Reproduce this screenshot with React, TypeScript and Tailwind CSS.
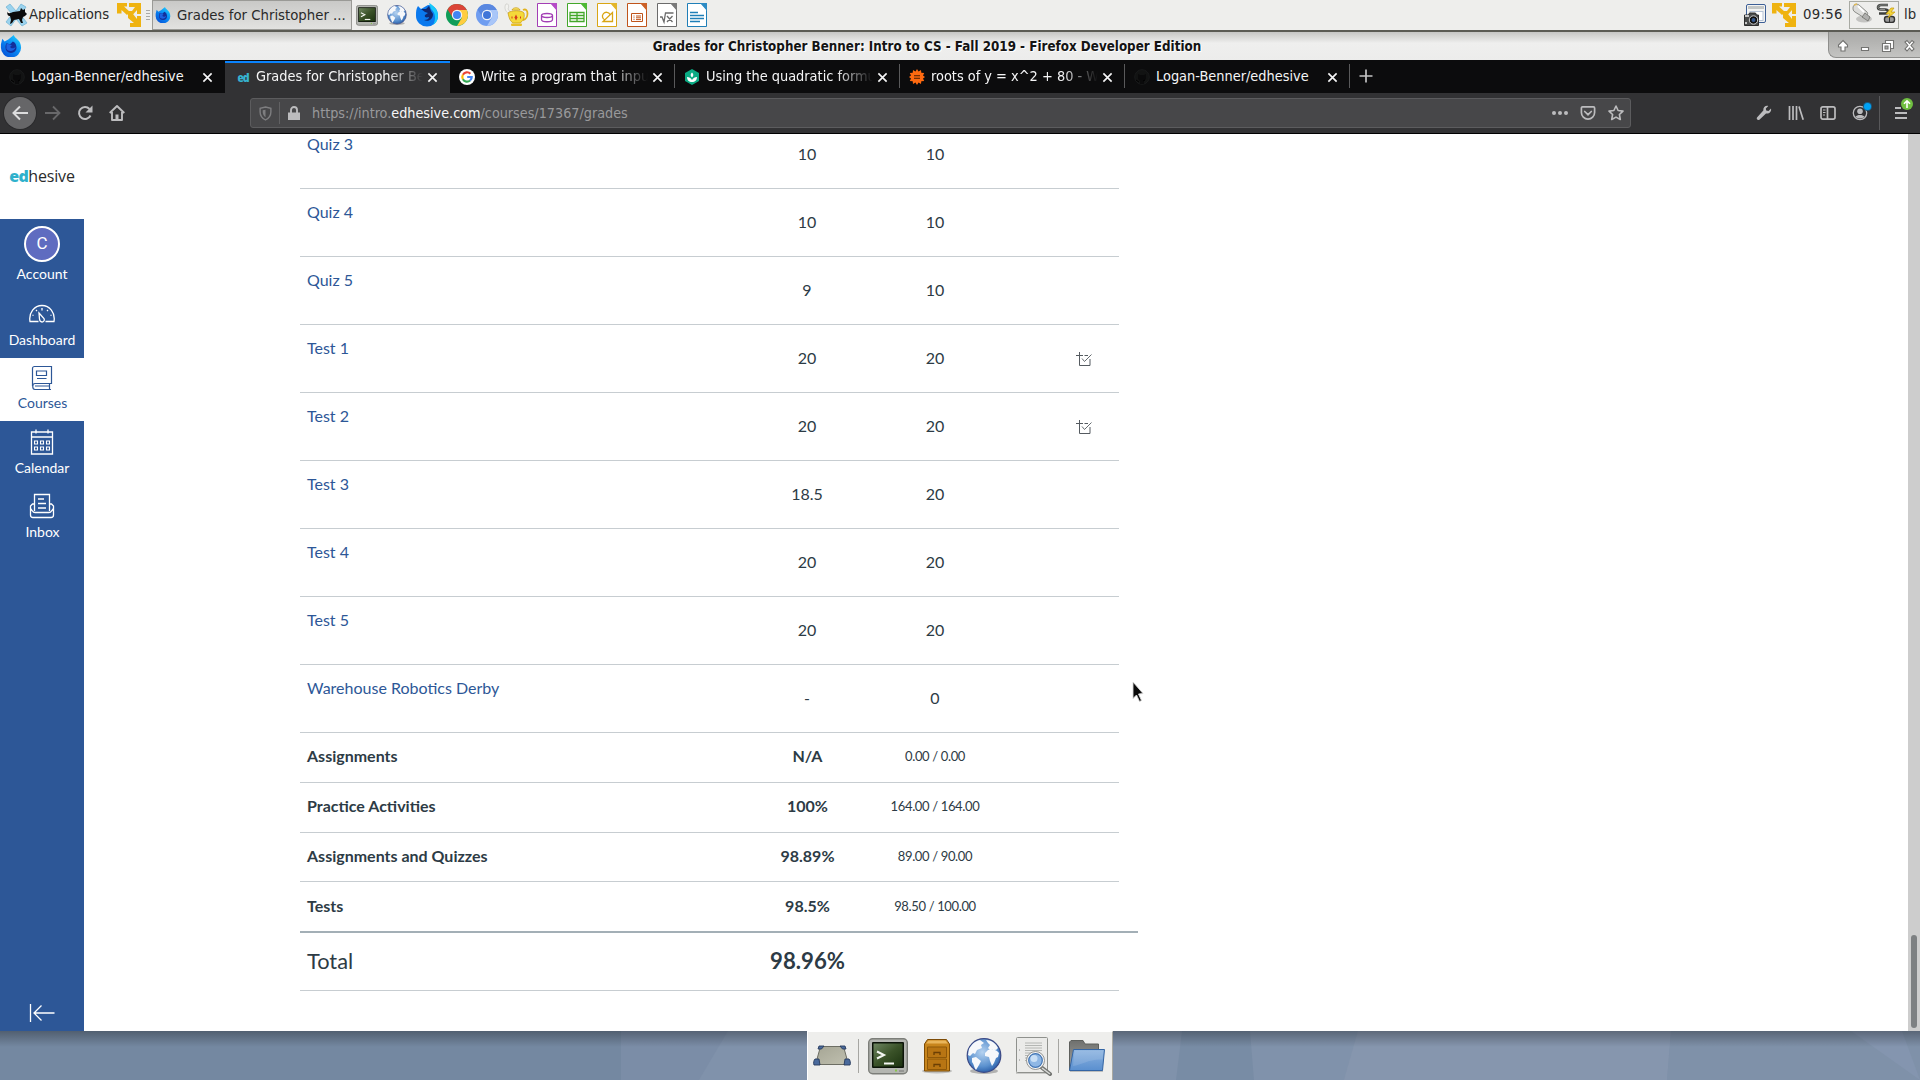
import React from "react";

type P = { className?: string };

const XfceMenuIcon = () => (
  <svg viewBox="0 0 24 24" className="h-6 w-6 shrink-0">
    <path d="M2 4l4-3 6 7 5-7 5 3-5 8 6 8-5 3-6-7-5 7-5-4 6-8z" fill="#9bd3ee" stroke="#5fa9cf" strokeWidth="0.6" />
    <path d="M3 9c2 2 4 1 6 0l7-1 1-3 2 2 2-1v3l2 2-2 2-2 1-1 3 1 3h-2l-2-4-5 1-2 3-2 1 1-4-1-4c-2 0-3-1-3-6z" fill="#0b0b0b" />
  </svg>
);

const YellowArrows = () => (
  <svg viewBox="0 0 24 24" className="h-6 w-6 shrink-0" fill="#efb310">
    <path d="M0 0h10v3.500H7l6 5.500-3 3-5.500-5v3.500H0z" />
    <path d="M12 0h12v11h-4V7l-4 4.500h-5V8h4l3-4h-6z" />
    <path d="M11 11h5l4 5v-3h4v11H13v-4h4l-6-5z" />
  </svg>
);

const FirefoxIcon = ({ className }: P) => (
  <svg viewBox="0 0 24 24" className={className}>
    <defs>
      <linearGradient id="ff" x1="1" y1="0" x2="0.200" y2="1">
        <stop offset="0" stopColor="#21dcff" />
        <stop offset="0.500" stopColor="#0a8cf5" />
        <stop offset="1" stopColor="#0653d8" />
      </linearGradient>
    </defs>
    <path d="M1 10l1.500-6L5 7l4-2 6-5c1 4 8 5 8 14a11 10.500 0 0 1-22 0z" fill="url(#ff)" />
    <path d="M7 9l4 1 3-3c3 1 4 4 4 7a6 5.500 0 0 1-12 0c0-2 0-3 1-5z" fill="#13309b" />
    <path d="M7 10c3-1 4 1 6 1l-2 2c1 2 4 2 6 0-1 5-8 6-10 2z" fill="#1c62e0" />
  </svg>
);

const FirefoxClassic = () => (
  <svg viewBox="0 0 24 24" className="h-6 w-6 shrink-0">
    <path d="M1 12c0-3 0-6 2-9l3 3 7-4c6 0 10 4 10 11a11 10.500 0 0 1-22 0z" fill="#0a79ee" />
    <path d="M14 0c4 2 9 6 9 13a11 11 0 0 1-5 9c3-5 3-12-2-16z" fill="#19c8fb" />
    <path d="M6 6l5 0 3-3 2 5 2 3c0 6-5 8-9 6 3 0 5-1 5-3-3 1-5 0-4-2l3-2-3-1z" fill="#10286f" />
  </svg>
);

const ChromeIcon = ({ a, b, c, d }: { a: string; b: string; c: string; d: string }) => (
  <svg viewBox="0 0 24 24" className="h-6 w-6 shrink-0">
    <circle cx="12" cy="12" r="11" fill={b} />
    <path d="M12 12V7h9.800a11 11 0 0 1-9.800 16l5-8.500z" fill={c} />
    <path d="M2.500 6.500A11 11 0 0 1 21.800 7H12l-4 8z" fill={a} />
    <circle cx="12" cy="12" r="5.200" fill="#f3f5f8" />
    <circle cx="12" cy="12" r="4" fill={d} />
  </svg>
);

const TerminalIcon = ({ className }: P) => (
  <svg viewBox="0 0 40 37" className={className} preserveAspectRatio="none">
    <defs>
      <linearGradient id="tm" x1="0" y1="0" x2="1" y2="1">
        <stop offset="0" stopColor="#6d8560" />
        <stop offset="0.500" stopColor="#3a5228" />
        <stop offset="1" stopColor="#1c3310" />
      </linearGradient>
    </defs>
    <rect x="0.700" y="0.700" width="38.600" height="35" rx="4" fill="#b4b6b1" stroke="#7c7e79" strokeWidth="1.400" />
    <rect x="4" y="4" width="32" height="26" rx="1" fill="#0c1409" />
    <rect x="5.500" y="5.500" width="29" height="23" fill="url(#tm)" />
    <path d="M9 13.500l7 3.500-7 3.500" fill="none" stroke="#f4f6f2" strokeWidth="2" />
    <path d="M16 25.500h10" stroke="#f4f6f2" strokeWidth="2" />
    <rect x="27" y="31.500" width="2" height="2" fill="#87c44a" />
    <path d="M31 33h5" stroke="#777" />
  </svg>
);

const GlobeIcon = ({ className }: P) => (
  <svg viewBox="0 0 36 36" className={className}>
    <defs>
      <radialGradient id="gl" cx="0.450" cy="0.400" r="0.600">
        <stop offset="0" stopColor="#b5d2f0" />
        <stop offset="0.700" stopColor="#5c92cf" />
        <stop offset="1" stopColor="#2f64ad" />
      </radialGradient>
    </defs>
    <ellipse cx="18" cy="33" rx="14" ry="3" fill="#000" opacity="0.250" />
    <circle cx="18" cy="17.500" r="16.800" fill="url(#gl)" stroke="#3c4a86" strokeWidth="1.200" />
    <path d="M3 11c3-5 6-8 11-9l4 3-3 2 1 3-5 2-2 4-2-1-3 3-2-1zM20 2c6 0 10 4 12 8l-2 2-4-1-2 1-2-2 2-3-2-2zM19 15l3-3 5-1 4 2 2 2-1 4-2 1-2 5-2 3-2-5-1-4-4-1zM6 20l4-1 5 4-2 4-3 5c-2-2-2-6-4-8z" fill="#f6f8fb" />
  </svg>
);

const CameraIcon = () => (
  <svg viewBox="0 0 24 24" className="h-6 w-6 shrink-0">
    <rect x="3.500" y="1.500" width="19" height="18" rx="1.500" fill="#f4f4f2" stroke="#3d5f96" />
    <rect x="5" y="3" width="16" height="3" fill="#c4c7c6" />
    <rect x="7" y="8.500" width="13" height="9" fill="#fff" stroke="#b7c4d6" />
    <path d="M1.500 12h4l1-2h6l1 2h2v10.500h-14z" fill="#4a4c4b" stroke="#2c2c2c" />
    <path d="M2 13h4M2 20h2" stroke="#c7c7c7" strokeWidth="2" />
    <circle cx="10.500" cy="17" r="4.200" fill="#111" stroke="#cfcfcf" strokeWidth="1" />
    <circle cx="10.500" cy="17" r="2" fill="#35588d" />
  </svg>
);

const MouseIcon = () => (
  <svg viewBox="0 0 20 20" className="h-5 w-5">
    <ellipse cx="12" cy="16" rx="8" ry="3.500" fill="#000" opacity="0.180" />
    <path d="M1 5c0-3 3-5 6-3l8 7c2 2-1 6-4 5L3 9C1 8 1 6 1 5z" fill="#dcdcda" stroke="#8d8f8a" />
    <path d="M6 3l6 6" stroke="#fff" strokeWidth="2" />
    <path d="M13 10l5 4-2 4-6-4z" fill="#b0b0ae" stroke="#6d6f6a" strokeWidth="0.800" />
    <path d="M2 2l3-1" stroke="#e2bb5a" strokeWidth="1.500" />
  </svg>
);

const PlugIcon = () => (
  <svg viewBox="0 0 20 20" className="h-5 w-5">
    <path d="M12 2H5C1 2 1 6.500 5 6.500h4c4 0 4 4 0 4H3" fill="none" stroke="#3c3e3b" strokeWidth="2.600" />
    <path d="M12 2H5C1 2 1 6.500 5 6.500h4" fill="none" stroke="#a0a29e" strokeWidth="0.800" />
    <rect x="8.500" y="13.500" width="10" height="6" rx="2.500" fill="#999" stroke="#333" strokeWidth="1.400" />
    <path d="M13.500 14v5" stroke="#333" />
    <path d="M15 5l-5 6h4l-2 4 7-6h-4l3-4z" fill="#f5d63c" stroke="#c49b0d" strokeWidth="0.700" />
  </svg>
);

const TeapotIcon = () => (
  <svg viewBox="0 0 26 24" className="h-6 w-[26px] shrink-0">
    <path d="M2 1c3-1 3 3 2 5l3 4-3 0C1 8 0 4 2 1z" fill="#f2f2ef" stroke="#c8c8c4" strokeWidth="0.700" />
    <path d="M19 7c6-3 6 9 0 10" fill="none" stroke="#e2b31f" strokeWidth="1.800" />
    <path d="M4 10c3-3 14-3 16 0 1 5-1 8-4 10H9c-3-2-4-5-5-10z" fill="#f5d93a" stroke="#c99a12" strokeWidth="0.700" />
    <path d="M8 7c1-3 7-3 8 0z" fill="#f7e365" stroke="#c99a12" strokeWidth="0.700" />
    <rect x="7" y="20.500" width="11" height="2.500" rx="1" fill="#e8bf27" />
    <path d="M12 11.500l1.500 3-1.500 3-1.500-3z" fill="#d63a1c" />
    <path d="M8 13.500v2M16.500 13.500v2" stroke="#d63a1c" />
  </svg>
);

const DocIcon = ({ color, fold, children }: { color: string; fold: string; children: React.ReactNode }) => (
  <svg viewBox="0 0 20 24" className="h-6 w-5 shrink-0">
    <path d="M0.500 0.500h19v23h-19z" fill="#fff" stroke={color} />
    <path d="M13 0h7v8z" fill={fold} />
    <path d="M13 1l6 7" stroke="#fff" strokeWidth="0.800" />
    <g fill="none" stroke={color} strokeWidth="1.300">{children}</g>
  </svg>
);

const Close = ({ className }: P) => (
  <svg viewBox="0 0 12 12" className={className}>
    <path d="M1.500 1.500l9 9M10.500 1.500l-9 9" stroke="currentColor" strokeWidth="1.800" />
  </svg>
);

const Octocat = () => (
  <svg viewBox="0 0 16 16" className="h-4 w-4">
    <circle cx="8" cy="8" r="7.300" fill="#121313" stroke="#191a1b" strokeWidth="1" />
    <path d="M4 5l2 1h4l2-1v5l-2 2v3H6v-3l-2-2z" fill="#0a0a0b" />
    <path d="M2 11l3 2M9 12l2-1" stroke="#000" />
  </svg>
);

const GoogleIcon = () => (
  <svg viewBox="0 0 16 16" className="h-4 w-4">
    <circle cx="8" cy="8" r="8" fill="#fff" />
    <g fill="none" strokeWidth="2.200">
      <path d="M11.400 4.700A4.700 4.700 0 0 0 3.900 5.700" stroke="#ea4335" />
      <path d="M3.900 5.700a4.700 4.700 0 0 0 0 4.600" stroke="#fbbc05" />
      <path d="M3.900 10.300a4.700 4.700 0 0 0 7.200 1.200" stroke="#34a853" />
      <path d="M11.100 11.500A4.600 4.600 0 0 0 12.700 8H8.200" stroke="#4285f4" />
    </g>
  </svg>
);

const BrainlyIcon = () => (
  <svg viewBox="0 0 16 16" className="h-4 w-4">
    <path d="M8 0l7 4v8l-7 4-7-4V4z" fill="#0bab84" />
    <path d="M8 13c-3 0-5-2-5-5 2 0 4 1 5 3 1-2 3-3 5-3 0 3-2 5-5 5zM8 8.500C6.200 7 6.200 5 8 3.500c1.800 1.500 1.800 3.500 0 5z" fill="#fff" />
  </svg>
);

const WolframIcon = () => (
  <svg viewBox="0 0 16 16" className="h-4 w-4">
    <path d="M8 0l1.500 2.400L12 1l.3 2.800 2.900.1-1.200 2.600L16 8l-2 1.500 1.200 2.600-2.900.1L12 15l-2.500-1.400L8 16l-1.500-2.400L4 15l-.3-2.800-2.900-.1L2 9.500 0 8l2-1.500L.8 3.900l2.900-.1L4 1l2.500 1.400z" fill="#ff6a10" />
    <path d="M5 6.700h6M5 9.300h6" stroke="#4a1c00" strokeWidth="1.100" />
  </svg>
);

const EdIcon = () => (
  <span className="font-['Open_Sans',sans-serif] text-[13px] leading-4 font-extrabold tracking-[-1px] text-[#36b3cf]">ed</span>
);

const tabs = [
  { title: "Logan-Benner/edhesive", icon: <Octocat /> },
  { title: "Grades for Christopher Benner", icon: <EdIcon />, active: true },
  { title: "Write a program that inputs", icon: <GoogleIcon /> },
  { title: "Using the quadratic formula", icon: <BrainlyIcon /> },
  { title: "roots of y = x^2 + 80 - Wolfram", icon: <WolframIcon /> },
  { title: "Logan-Benner/edhesive", icon: <Octocat /> },
];

function Panel() {
  return (
    <div className="flex h-8 shrink-0 items-start border-b-2 border-[#5b5b54] bg-[#eeeeec] font-['DejaVu_Sans',sans-serif] text-[13.3px] leading-[28px] text-[#2a2a2a]">
      <div className="flex h-[30px] w-[117px] items-center pl-1">
        <XfceMenuIcon />
        <span className="ml-px tracking-[-0.1px]">Applications</span>
      </div>
      <div className="flex h-[30px] w-[35px] items-center">
        <YellowArrows />
        <div className="ml-[5px] flex w-1 flex-col gap-[2px]">
          <i className="h-px bg-[#a9a9a6]" /><i className="h-px bg-[#a9a9a6]" /><i className="h-px bg-[#a9a9a6]" /><i className="h-px bg-[#a9a9a6]" />
        </div>
      </div>
      <div className="flex h-[30px] w-[200px] items-center border border-[#9a9a96] bg-gradient-to-b from-[#c9c9c7] to-[#e2e2e0] pl-0.5">
        <FirefoxIcon className="h-4 w-4" />
        <span className="ml-1.5 pt-px whitespace-nowrap">Grades for Christopher ...</span>
      </div>
      <div className="flex h-[30px] items-center pl-1">
        <TerminalIcon className="h-[21px] w-[22px]" />
        <GlobeIcon className="ml-[9px] h-5 w-5" />
        <div className="ml-2 flex gap-1.5">
          <FirefoxClassic />
          <ChromeIcon a="#db4437" b="#0f9d58" c="#ffcd40" d="#4285f4" />
          <ChromeIcon a="#5a88e0" b="#6f9df0" c="#a9c6f8" d="#3f75d8" />
        </div>
        <div className="ml-[5px] flex"><TeapotIcon /></div>
        <div className="ml-[7px] flex gap-2.5">
          <DocIcon color="#a33eb5" fold="#b54cc6"><ellipse cx="10" cy="12.500" rx="5.500" ry="2" /><path d="M4.500 12.500v4c0 3 11 3 11 0v-4" /></DocIcon>
          <DocIcon color="#43a72a" fold="#4fb835"><path d="M3 9.500h14v9H3zM3 12.500h14M3 15.500h14M10 9.500v9" /></DocIcon>
          <DocIcon color="#d9a514" fold="#e3b52c"><path d="M6 18.500h9.500V9.500zM8 17a4 4 0 1 1 5-5.500" /></DocIcon>
          <DocIcon color="#c0541a" fold="#cb6128"><path d="M4.500 10.500h11v8h-11zM6.500 13h1M9 13h5M6.500 14.800h1M9 14.800h5M6.500 16.600h1M9 16.600h5" strokeWidth="1" /></DocIcon>
          <DocIcon color="#6b6b6b" fold="#7a7a7a"><path d="M3 14l2 0 2 5 1.500-9h8M10 13l5.500 6M15.500 13l-5.500 6" /></DocIcon>
          <DocIcon color="#1f7fb8" fold="#2d8bc4"><path d="M3 9.500h8M3 12.500h14M3 15.500h14M3 18.500h10" /></DocIcon>
        </div>
      </div>
      <div className="ml-auto flex h-[30px] items-center">
        <CameraIcon />
        <div className="ml-[5px] flex"><YellowArrows /></div>
        <span className="ml-[7px] w-[46px] tracking-[0.3px]">09:56</span>
        <div className="flex h-7 w-[50px] items-center justify-between border border-[#a8aaa3] px-0.5 pb-1">
          <MouseIcon />
          <PlugIcon />
        </div>
        <span className="ml-[5px] w-4">lb</span>
      </div>
    </div>
  );
}

function TitleBar() {
  return (
    <div className="relative flex h-7 shrink-0 items-center justify-center bg-gradient-to-b from-[#c6c6c4] via-[#efefee] via-40% to-[#ececeb] font-['DejaVu_Sans_Condensed','DejaVu_Sans',sans-serif] text-[13.3px] leading-7 font-bold text-[#141414]">
      <div className="absolute top-[3px] left-0 flex"><FirefoxIcon className="h-[22px] w-[22px]" /></div>
      <span className="mr-[66px] pt-0.5 font-stretch-condensed [text-shadow:1px_1px_0_#fff]">Grades for Christopher Benner: Intro to CS - Fall 2019 - Firefox Developer Edition</span>
      <div className="absolute top-0 right-0 flex h-[26px] w-[92px] items-center rounded-bl-lg border-b border-l border-[#8e8e8c] bg-gradient-to-b from-[#a9a9a7] to-[#c4c4c2] pt-0.5 pl-[3px]">
        <svg viewBox="0 0 88 22" className="h-[22px] w-[88px]">
          <g fill="#fff" stroke="#737371" strokeWidth="1.100">
            <path d="M11 5.500l4.500 4.500v2H13v4H9v-4H6.500v-2z" />
            <path d="M29.500 12.500h7v3h-7z" />
            <path d="M53.500 5.500h8v8h-8z" />
            <path d="M50.500 8.500h8v8h-8z" />
            <path d="M53 11h3v3h-3z" fill="#aaa" />
            <path d="M73 7l2-1.500 2.500 3 2.500-3L82 7l-3 3.500 3 3.500-2 2-2.500-3-2.500 3-2-2 3-3.500z" />
          </g>
        </svg>
      </div>
    </div>
  );
}

function TabStrip() {
  return (
    <div className="flex h-[33px] shrink-0 bg-[#0c0c0d] font-['DejaVu_Sans_Condensed','DejaVu_Sans',sans-serif] text-[14.4px] font-stretch-condensed leading-[30px] text-[#f5f5f6]">
      {tabs.map((t, i) => (
        <div
          key={i}
          className={
            "flex w-[225px] items-center pl-[9px] " +
            (t.active ? "mt-px border-t-2 border-[#0a84ff] bg-[#323234]" : "pt-px")
          }
        >
          <div className={t.active ? "mb-0.5 flex w-[22px] justify-center pr-1" : "flex w-[22px]"}>{t.icon}</div>
          <div
            className={
              "w-[167px] overflow-hidden whitespace-nowrap " +
              (i === 0 || i === 5 ? "" : "[mask-image:linear-gradient(to_right,black_78%,transparent)] ") +
              (t.active ? "mb-[5px]" : "mb-0.5")
            }
          >
            {t.title}
          </div>
          <Close className={t.active ? "mb-px ml-1 h-[11px] w-[11px]" : "ml-1 h-[11px] w-[11px]"} />
          {i > 1 && <div className="mb-0.5 ml-auto h-6 w-px bg-[#5a5a5b]" />}
        </div>
      ))}
      <svg viewBox="0 0 14 14" className="mt-[9px] ml-[9px] h-3.5 w-3.5">
        <path d="M7 0.500v13M0.500 7h13" stroke="#c3c3c4" strokeWidth="1.700" />
      </svg>
    </div>
  );
}

function Toolbar() {
  return (
    <div className="flex h-[41px] shrink-0 items-center border-b border-black bg-[#323234] text-[#bcbcbe]">
      <div className="ml-1 flex h-8 w-8 items-center justify-center rounded-full bg-[#666668] ring-1 ring-[#2a2a2c] text-[#dcdcdd]">
        <svg viewBox="0 0 16 16" className="h-4 w-4"><path d="M16 8H1.500M8 1.500L1.500 8 8 14.500" fill="none" stroke="currentColor" strokeWidth="2" /></svg>
      </div>
      <svg viewBox="0 0 16 16" className="ml-[9px] h-4 w-4 text-[#68686a]"><path d="M0 8h14.500M8 1.500L14.500 8 8 14.500" fill="none" stroke="currentColor" strokeWidth="1.800" /></svg>
      <svg viewBox="0 0 16 16" className="ml-4 h-4 w-4"><path d="M13.500 10.500A6 6 0 1 1 12.500 4" fill="none" stroke="currentColor" strokeWidth="2" /><path d="M15.500 0.500v7h-7z" fill="currentColor" /></svg>
      <svg viewBox="0 0 16 16" className="ml-4 h-4 w-4"><path d="M0.700 8L8 1l7.300 7M3 7v8h10V7" fill="none" stroke="currentColor" strokeWidth="1.900" strokeLinejoin="round" /><path d="M6.500 15V9.500h3V15z" fill="currentColor" /></svg>
      <div className="ml-[125px] flex h-[30px] w-[1381px] items-center rounded-[3px] border border-[#5c5c5e] bg-[#474749]">
        <svg viewBox="0 0 14 16" className="ml-2 h-[15px] w-[13px] text-[#7e7e80]"><path d="M7 1l5.800 1.500v4C12.800 10.500 10 13.500 7 15 4 13.500 1.200 10.500 1.200 6.500v-4z" fill="none" stroke="currentColor" strokeWidth="1.500" /><path d="M7 4v8c-1.800-1.200-3-3-3-5.500v-2z" fill="currentColor" /></svg>
        <div className="ml-[7px] h-[22px] w-px bg-[#616163]" />
        <svg viewBox="0 0 12 14" className="ml-2 h-3.5 w-3"><path d="M0 6.500h12V14H0z" fill="currentColor" /><path d="M3 7V4a3 3 0 0 1 6 0v3" fill="none" stroke="currentColor" strokeWidth="1.900" /></svg>
        <div className="mt-px ml-[12px] font-['DejaVu_Sans_Condensed','DejaVu_Sans',sans-serif] text-[14.25px] font-stretch-condensed text-[#99999b]">
          https://intro.<span className="text-[#f6f6f7]">edhesive.com</span>/courses/17367/grades
        </div>
        <div className="mr-1.5 ml-auto flex items-center gap-3">
          <svg viewBox="0 0 16 16" className="h-4 w-4" fill="currentColor"><circle cx="2" cy="8" r="2" /><circle cx="8" cy="8" r="2" /><circle cx="14" cy="8" r="2" /></svg>
          <svg viewBox="0 0 16 16" className="h-4 w-4" fill="none" stroke="currentColor" strokeWidth="1.700"><path d="M2.500 1.900h11c.6 0 1.100.5 1.100 1.100v4.500a6.600 6.600 0 0 1-13.200 0V3c0-.6.500-1.100 1.100-1.100z" /><path d="M4.700 6.500L8 9.700l3.300-3.200" strokeLinecap="round" /></svg>
          <svg viewBox="0 0 16 16" className="h-4 w-4" fill="none" stroke="currentColor" strokeWidth="1.600" strokeLinejoin="round"><path d="M8 1l2.100 4.500 4.900.6-3.600 3.400.9 5L8 12.100l-4.300 2.400.9-5L1 6.100l4.900-.6z" /></svg>
        </div>
      </div>
      <div className="ml-[125px] flex items-center gap-4">
        <svg viewBox="0 0 16 16" className="h-4 w-4"><path d="M15 3.500l-2.500 2.500-2.300-.4-.4-2.200L12.300 1C9.500.3 7 2.200 7.300 5.500L1 12.500c-1 1.500 1 3.300 2.400 2.300L10 8.500c3.400.5 5.700-2 5-5z" fill="currentColor" /></svg>
        <svg viewBox="0 0 16 16" className="h-4 w-4" stroke="currentColor" strokeWidth="1.700"><path d="M1.500 1v14M5 1v14M8.500 1v14M11 1.500l4.200 13.300" /></svg>
        <svg viewBox="0 0 16 16" className="h-4 w-4" fill="none" stroke="currentColor" strokeWidth="1.700"><rect x="1" y="1.900" width="14" height="12.200" rx="1.800" /><path d="M7.500 2v12" /><path d="M3 5h2.500M3 7.500h2.500M3 10h2" strokeWidth="1.100" /></svg>
        <div className="relative flex">
          <svg viewBox="0 0 16 16" className="h-4 w-4"><circle cx="8" cy="8" r="6.700" fill="none" stroke="currentColor" strokeWidth="1.300" /><circle cx="8" cy="6.200" r="2.800" fill="currentColor" /><path d="M3.500 11.800C5 9.400 11 9.400 12.500 11.800 10.500 14 5.500 14 3.500 11.800z" fill="currentColor" /></svg>
          <i className="absolute -top-0.5 -right-[3px] h-[7px] w-[7px] rounded-full bg-[#00a2f5] ring-1 ring-[#1b5a80]" />
        </div>
      </div>
      <div className="ml-[11px] h-[34px] w-px bg-[#58585a]" />
      <div className="relative ml-[15px] h-3.5 w-3">
        <svg viewBox="0 0 12 14" className="h-3.5 w-3"><path d="M0 2h6M0 7h12M0 12h12" stroke="currentColor" strokeWidth="2" /></svg>
        <svg viewBox="0 0 12 12" className="absolute -top-2 left-1.5 h-3 w-3"><circle cx="6" cy="6" r="6" fill="#70bf41" /><path d="M6 10V3M3 5.800L6 2.800l3 3" fill="none" stroke="#fff" strokeWidth="1.600" /></svg>
      </div>
    </div>
  );
}

const navText = "text-center text-[14px] leading-5 font-['Lato',sans-serif]";

function Sidebar() {
  return (
    <div className="flex w-[84px] shrink-0 flex-col bg-[#2d5797] text-white">
      <div className="flex h-[85px] items-center justify-center bg-white font-['Open_Sans',sans-serif] text-[16px] leading-5 tracking-[-0.15px] text-[#2b2b2b]">
        <span className="-mt-[2px]"><b className="font-extrabold text-[#2fb1cc] tracking-[-0.6px]">ed</b>hesive</span>
      </div>
      <div className="flex h-[75px] flex-col items-center pt-[7px]">
        <div className="flex h-9 w-9 items-center justify-center rounded-full border-2 border-white bg-[#5f6cc0] font-['Roboto',sans-serif] text-[17px]">C</div>
        <span className={navText + " mt-0.5"}>Account</span>
      </div>
      <div className="flex h-16 flex-col items-center pt-[7px]">
        <svg viewBox="0 0 26 26" className="h-[26px] w-[26px]" fill="none" stroke="#fff" strokeWidth="1.300">
          <path d="M9.500 20.500H1c-1.500-9 4.500-16 12-16s13.500 7 12 16h-8.500" />
          <path d="M10 12l5 5.500c1 2-.5 3.500-2 3.500s-2.300-1-2.500-3z" />
          <path d="M13 7v2.500M7 9l1 1M19 9l-1 1M4.500 14.500l-1-.5M21.500 14.500l1-.5" />
        </svg>
        <span className={navText + " mt-[3px]"}>Dashboard</span>
      </div>
      <div className="flex h-[63px] flex-col items-center bg-white pt-[7px] text-[#2d5797]">
        <svg viewBox="0 0 26 26" className="h-[26px] w-[26px]" fill="none" stroke="#2d5797" strokeWidth="1.200">
          <path d="M5.500 1.500h17v17H6c-3 0-3 6 0 6h16M3.500 21V3.500c0-1.200.8-2 2-2" />
          <path d="M7.500 6h10v4.500h-10zM8 13.500h9.500M6 21h14M20.500 18.500v6" />
        </svg>
        <span className={navText + " mt-0.5 pl-px"}>Courses</span>
      </div>
      <div className="flex h-[65px] flex-col items-center pt-2">
        <svg viewBox="0 0 26 26" className="h-[26px] w-[26px]" fill="none" stroke="#fff" strokeWidth="1.300">
          <path d="M2.500 3h21v22h-21zM2.500 8h21M7 0.500v4M19 0.500v4" />
          <path d="M5.500 12h3v3h-3zM11.500 12h3v3h-3zM17.500 12h3v3h-3zM5.500 18h3v3h-3zM11.500 18h3v3h-3zM17.500 18h3v3h-3z" strokeWidth="1.100" />
        </svg>
        <span className={navText + " mt-[3px]"}>Calendar</span>
      </div>
      <div className="flex h-[65px] flex-col items-center pt-[7px]">
        <svg viewBox="0 0 26 26" className="h-[26px] w-[26px]" fill="none" stroke="#fff" strokeWidth="1.300">
          <path d="M5.500 18V1.500h15V18" />
          <path d="M5.500 11H3.500l-2 2v9c0 1.500 1 2.500 2.500 2.500h18c1.500 0 2.500-1 2.500-2.500v-9l-2-2h-2M1.500 15.500l2 2.500c.5 1 1.500 1.500 2.500 1.500h14c1 0 2-.5 2.500-1.500l2-2.500" />
          <path d="M9 6h6M9 10.500h8M9 15h8" />
        </svg>
        <span className={navText + " mt-[3px] pl-px"}>Inbox</span>
      </div>
      <div className="mt-auto flex h-9 justify-center pt-2">
        <svg viewBox="0 0 26 20" className="h-5 w-[26px]" fill="none" stroke="#fff" strokeWidth="1.300"><path d="M1.500 1v18M25.500 10H5M12.500 2.500L5 10l7.500 7.500" /></svg>
      </div>
    </div>
  );
}

const rows = [
  ["Quiz 3", "10", "10"],
  ["Quiz 4", "10", "10"],
  ["Quiz 5", "9", "10"],
  ["Test 1", "20", "20"],
  ["Test 2", "20", "20"],
  ["Test 3", "18.5", "20"],
  ["Test 4", "20", "20"],
  ["Test 5", "20", "20"],
  ["Warehouse Robotics Derby", "-", "0"],
];

const groups = [
  { name: "Assignments", pct: "N/A", pts: "0.00 / 0.00", h: "h-[50px] pb-[3px]" },
  { name: "Practice Activities", pct: "100%", pts: "164.00 / 164.00", h: "h-[50px] pb-[3px]" },
  { name: "Assignments and Quizzes", pct: "98.89%", pts: "89.00 / 90.00", h: "h-[49px] pb-0.5" },
  { name: "Tests", pct: "98.5%", pts: "98.50 / 100.00", h: "h-[49px] pb-px" },
];

const RubricIcon = () => (
  <svg viewBox="0 0 16 15" className="h-[15px] w-4" fill="none" stroke="#555b60" strokeWidth="1">
    <path d="M3.500 0v13.500h10.500V7M0 3.500h7M8.500 3.500h3.500" />
    <path d="M6 6.500l2.500 3 7-7" strokeWidth="0.900" />
  </svg>
);

function Grades() {
  return (
    <div className="ml-[216px] flex w-[838px] flex-col text-[16px] leading-6 text-[#2d3b45] -mt-[13px]">
      {rows.map(([n, s, o]) => (
        <div key={n} className="flex h-[68px] w-[819px] shrink-0 items-center border-b border-[#c7cdd1]">
          <div className="w-[443px] self-start pt-[11px] pl-[7px] text-[#2d5797]">{n}</div>
          <div className="w-32 pb-px text-center">{s}</div>
          <div className="w-32 pb-px text-center">{o}</div>
          <div className="flex w-[120px] justify-center pl-[50px] pt-px">{(n === "Test 1" || n === "Test 2") && <RubricIcon />}</div>
        </div>
      ))}
      {groups.map((g) => (
        <div key={g.name} className={g.h + " flex w-[819px] shrink-0 items-center border-[#c7cdd1] " + (g.name === "Tests" ? "" : "border-b")}>
          <div className="w-[443px] pl-[7px] font-bold">{g.name}</div>
          <div className="w-32 pl-px text-center font-bold">{g.pct}</div>
          <div className="w-32 text-center text-[13px] tracking-[-0.35px]">{g.pts}</div>
        </div>
      ))}
      <div className="h-0.5 shrink-0 bg-[#a3afb6]" />
      <div className="flex h-[58px] w-[819px] shrink-0 items-center border-b border-[#c7cdd1] pb-0.5 text-[22px]">
        <div className="w-[443px] pl-[7px] text-[21.8px]">Total</div>
        <div className="w-32 pl-px text-center text-[22.2px] font-bold">98.96%</div>
      </div>
    </div>
  );
}

const CabinetIcon = () => (
  <svg viewBox="0 0 30 36" className="h-9 w-[30px]">
    <ellipse cx="15" cy="33" rx="15" ry="2.500" fill="#000" opacity="0.200" />
    <path d="M2.500 6l3-4.500h19l3 4.500v27h-25z" fill="#c8851c" stroke="#7d4c07" />
    <path d="M4 5.500l2.500-3h17l2.500 3z" fill="#e9b55a" />
    <path d="M5.500 9h19v10.500h-19zM5.500 21h19v10.500h-19z" fill="#b87513" stroke="#8f5808" />
    <path d="M12 17v-2.500h6V17M12 29v-2.500h6V29" fill="none" stroke="#6b3f04" strokeWidth="1.300" />
  </svg>
);

const SearchDocIcon = () => (
  <svg viewBox="0 0 38 40" className="h-10 w-[38px]">
    <rect x="1" y="36" width="32" height="2" fill="#000" opacity="0.150" />
    <rect x="1.500" y="1.500" width="31" height="35" rx="1" fill="#ebebe9" stroke="#8f918d" />
    <path d="M10 7h17M10 9.500h17M10 12h17M10 14.500h17M10 17h8M10 19.500h6M10 22h5M10 24.500h5" stroke="#b4b6b3" />
    <path d="M4 14h1M4 24h1" stroke="#888" />
    <path d="M26 31l9 7" stroke="#737572" strokeWidth="4" strokeLinecap="round" />
    <path d="M27 32l8 6" stroke="#dadbd9" strokeWidth="1.500" />
    <circle cx="20.500" cy="24.500" r="7.500" fill="#a9c8ec" stroke="#f5f5f5" strokeWidth="3" />
    <circle cx="20.500" cy="24.500" r="9" fill="none" stroke="#7c7e7b" strokeWidth="0.800" />
    <circle cx="20.500" cy="24.500" r="6.800" fill="#8fb7e4" stroke="#3f73b3" strokeWidth="1.200" />
    <circle cx="19" cy="22.500" r="3.500" fill="#c9dff5" />
  </svg>
);

const FolderIcon = () => (
  <svg viewBox="0 0 38 34" className="h-[34px] w-[38px]">
    <defs>
      <linearGradient id="fd" x1="0" y1="0" x2="0" y2="1"><stop offset="0" stopColor="#8db4e0" /><stop offset="1" stopColor="#5a8fcf" /></linearGradient>
      <linearGradient id="fb" x1="0" y1="0" x2="0" y2="1"><stop offset="0" stopColor="#6f706e" /><stop offset="1" stopColor="#a5a6a3" /></linearGradient>
    </defs>
    <rect x="2" y="31" width="33" height="2" fill="#000" opacity="0.200" />
    <path d="M1.500 31V3l1.500-1.500h12L17 5h13.500v26z" fill="url(#fb)" stroke="#5e605d" />
    <path d="M5.500 10.500h31l-2 21h-33z" fill="url(#fd)" stroke="#3465a4" />
    <path d="M6.500 11.500h29l-1 9C20 20 14 26 5 27z" fill="#fff" opacity="0.120" />
  </svg>
);

const DesktopIcon = () => (
  <svg viewBox="0 0 38 22" className="h-[22px] w-[38px]">
    <defs><linearGradient id="dk" x1="0" y1="0" x2="1" y2="1"><stop offset="0" stopColor="#a5a594" /><stop offset="1" stopColor="#c0c0b0" /></linearGradient></defs>
    <path d="M7.500 1.500h23l5 18h-33z" fill="url(#dk)" stroke="#6c6d63" />
    <g fill="#4a6a9c" stroke="#263a5e" strokeWidth="0.900">
      <path d="M6 1h5L8.500 4H5z" /><path d="M32 1h-5l2.500 3H33z" />
      <path d="M2 14h4l1 6H1c-1-2 0-5 1-6z" /><path d="M36 14h-4l-1 6h6c1-2 0-5-1-6z" />
    </g>
  </svg>
);

function Desktop() {
  return (
    <div className="relative flex h-[49px] shrink-0 justify-center overflow-hidden bg-[#8092ab]">
      <svg viewBox="0 0 1920 49" className="absolute inset-0 h-[49px] w-[1920px]" preserveAspectRatio="none">
        <path d="M0 0h621v49H0z" fill="#7488a1" />
        <path d="M621 0h107l-29 49h-78z" fill="#7b8da7" />
        <path d="M1182 0h68l4 49h-78z" fill="#788ca5" />
        <path d="M1358 0h313l-4 49h-323z" fill="#8696ae" />
        <path d="M1671 0h249v49h-253z" fill="#7f91a9" />
        <path d="M1851 0h51l18 49z" fill="#8495af" />
      </svg>
      <div className="absolute inset-x-0 top-0 h-4 bg-gradient-to-b from-black/30 to-transparent" />
      <div className="relative flex h-[49px] w-[306px] items-center border-t border-r border-l border-t-white border-r-[#aaa9a2] border-l-white bg-[#eeeeec] pl-[5px]">
        <DesktopIcon />
        <div className="ml-[7px] h-[34px] w-px bg-[#a6a6a2]" />
        <div className="ml-[9px] flex"><TerminalIcon className="h-[37px] w-10" /></div>
        <div className="ml-[14px] flex"><CabinetIcon /></div>
        <div className="ml-[14px] flex"><GlobeIcon className="h-9 w-9" /></div>
        <div className="ml-[13px] flex"><SearchDocIcon /></div>
        <div className="ml-[5px] h-[34px] w-px bg-[#a6a6a2]" />
        <div className="ml-[9px] flex"><FolderIcon /></div>
      </div>
    </div>
  );
}

export default function App() {
  return (
    <div className="relative flex h-[1080px] w-[1920px] flex-col overflow-hidden bg-white font-['Lato',sans-serif]">
      <Panel />
      <TitleBar />
      <TabStrip />
      <Toolbar />
      <div className="flex h-[897px] shrink-0 overflow-hidden bg-white">
        <Sidebar />
        <div className="flex-1 overflow-hidden"><Grades /></div>
        <div className="flex w-3 justify-center bg-[#cdcdcd] pt-[801px]">
          <div className="h-[93px] w-1.5 rounded-full bg-[#7d8082]" />
        </div>
      </div>
      <Desktop />
      <svg viewBox="0 0 12 22" className="absolute top-[681px] left-[1132px] h-[22px] w-3">
        <path d="M1 1l10 11.500-4.500.5 3 6.500-2 1-3-6.500-3.500 3.500z" fill="#0a0a0a" stroke="#d8d8d8" strokeWidth="0.900" />
      </svg>
    </div>
  );
}
